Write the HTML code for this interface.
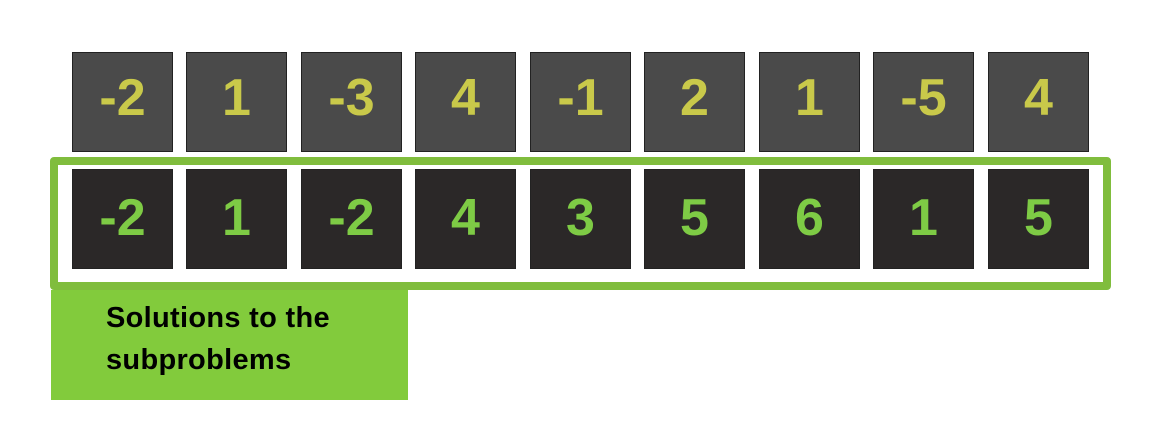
<!DOCTYPE html>
<html><head><style>
body{margin:0;width:1161px;height:440px;background:#fff;position:relative;overflow:hidden;font-family:"Liberation Sans",Arial,sans-serif}
.b{position:absolute;width:99px;height:98px;border:1px solid #222;display:flex;align-items:center;justify-content:center;font-weight:bold;font-size:52px;line-height:1}
.t{top:52px;background:#4a4a4a;color:#c9c94a}
.u{top:169px;background:#2b2828;color:#7ecb45}
.t span{margin-top:-8px}
.u span{margin-top:-2px}
#g{position:absolute;left:50px;top:157px;width:1045px;height:117px;border:8px solid #80bd3d;border-radius:4px}
#l{position:absolute;left:51px;top:290px;width:357px;height:110px;background:#82cb3c}
#l div{position:absolute;left:55px;top:7px;font-size:29px;font-weight:bold;line-height:42px;color:#000;letter-spacing:0.3px}
</style></head><body>
<div id="g"></div>
<div id="l"><div>Solutions to the<br>subproblems</div></div>
<div class="b t" style="left:72px"><span>-2</span></div>
<div class="b t" style="left:186px"><span>1</span></div>
<div class="b t" style="left:301px"><span>-3</span></div>
<div class="b t" style="left:415px"><span>4</span></div>
<div class="b t" style="left:530px"><span>-1</span></div>
<div class="b t" style="left:644px"><span>2</span></div>
<div class="b t" style="left:759px"><span>1</span></div>
<div class="b t" style="left:873px"><span>-5</span></div>
<div class="b t" style="left:988px"><span>4</span></div>
<div class="b u" style="left:72px"><span>-2</span></div>
<div class="b u" style="left:186px"><span>1</span></div>
<div class="b u" style="left:301px"><span>-2</span></div>
<div class="b u" style="left:415px"><span>4</span></div>
<div class="b u" style="left:530px"><span>3</span></div>
<div class="b u" style="left:644px"><span>5</span></div>
<div class="b u" style="left:759px"><span>6</span></div>
<div class="b u" style="left:873px"><span>1</span></div>
<div class="b u" style="left:988px"><span>5</span></div>
</body></html>
